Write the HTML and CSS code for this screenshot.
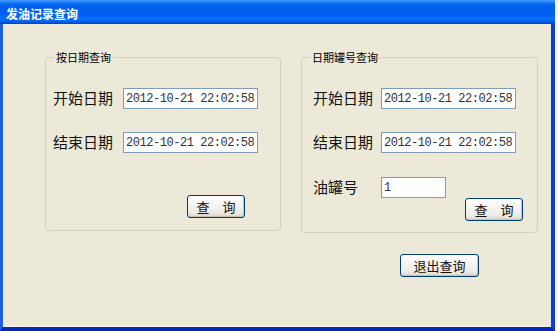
FILE: index.html
```html
<!DOCTYPE html>
<html lang="zh-CN">
<head>
<meta charset="utf-8">
<title>发油记录查询</title>
<link rel="stylesheet" href="styles.css">
</head>
<body>

<!-- ======= JANELA ======= -->
<div class="window">
  <div class="titlebar">发油记录查询</div>

  <div class="client">
    <div class="groups">
      <!-- -------- 按日期查询 -------- -->
      <fieldset class="group group-date">
        <legend>按日期查询</legend>
        <div class="field"><label>开始日期</label><input class="txt" value="2012-10-21 22:02:58"></div>
        <div class="field"><label>结束日期</label><input class="txt" value="2012-10-21 22:02:58"></div>
        <div class="actions"><button class="btn btn-query">查　询</button></div>
      </fieldset>

      <!-- -------- 日期罐号查询 -------- -->
      <fieldset class="group group-tank">
        <legend>日期罐号查询</legend>
        <div class="field"><label>开始日期</label><input class="txt" value="2012-10-21 22:02:58"></div>
        <div class="field"><label>结束日期</label><input class="txt" value="2012-10-21 22:02:58"></div>
        <div class="field field-tank"><label>油罐号</label><input class="txt txt-short" value="1"></div>
        <div class="actions"><button class="btn btn-query">查　询</button></div>
      </fieldset>
    </div>

    <div class="footer"><button class="btn btn-exit">退出查询</button></div>
  </div>
</div>

</body>
</html>
```

FILE: styles.css
```css
/* ---------- RESET ---------- */
*{margin:0;padding:0;box-sizing:border-box;}
body{width:558px;height:331px;overflow:hidden;background:#f4f6fb;
     font-family:"Noto Sans CJK SC","Noto Sans",sans-serif;color:#000;}

/* ---------- JANELA XP ---------- */
.window{width:555px;height:331px;display:flex;flex-direction:column;
        border-left:3px solid #1a5fe4;border-right:4px solid #0a3fd0;border-bottom:4px solid #0629b8;}
.titlebar{height:24px;margin:0 -4px 0 -3px;padding-left:6px;overflow:hidden;
          font-size:12px;font-weight:700;line-height:28px;color:#fff;
          background:linear-gradient(to bottom,#4a9dff 0%,#2584fd 8%,#0b6ef5 14%,#0262ee 24%,#005ef0 56%,#0565f8 68%,#0a6dfd 78%,#0465f0 88%,#0054d8 94%,#0040ae 100%);}
.client{flex:1;background:#ece9d8;padding:26px 13px 0 41px;border-left:1px solid #f3f1e8;border-bottom:1px solid #f8f6ee;}

/* ---------- GROUP BOX ---------- */
.groups{display:flex;gap:20px;align-items:flex-start;}
.group{min-width:0;flex:none;border:1px solid #d0d0bf;border-radius:4px;padding:24px 0 12px;}
.group legend{margin-left:8px;padding:0 2px;font-size:11px;line-height:14px;}
.group-date{width:236px;}
.group-tank{width:237px;padding-bottom:11px;}

/* ---------- CAMPOS ---------- */
.field{display:flex;align-items:center;height:21px;}
.field + .field{margin-top:23px;}
.field label{font-size:15px;line-height:21px;flex:none;padding-bottom:3px;color:#111;}
.group-date .field{padding-left:7px;}
.group-date .field label{width:70px;}
.group-tank .field{padding-left:11px;}
.group-tank .field label{width:68px;}
.group-tank .field-tank{margin-top:24px;}

.txt{width:135px;height:21px;flex:none;border:1px solid #7f9db9;background:#fff;padding:0 2px;
     font-family:"Liberation Mono",monospace;font-size:12px;letter-spacing:-.45px;color:#333;outline:none;}
.txt-short{width:65px;}

/* ---------- BOTÕES ---------- */
.actions{display:flex;justify-content:flex-end;}
.group-date .actions{margin-top:42px;padding-right:35px;}
.group-tank .actions{padding-right:14px;}
.btn{height:23px;border:1px solid #003c74;border-radius:3px;cursor:pointer;
     font-family:inherit;font-size:13px;color:#111;
     background:linear-gradient(to bottom,#fff 0%,#f6f5f1 40%,#ecebe6 80%,#d8d3c6 100%);
     box-shadow:inset -1px -1px 0 #c9c4b6;}
.btn-query{width:58px;}
.btn-exit{width:79px;}
.footer{display:flex;justify-content:flex-end;margin-top:21px;padding-right:59px;}
```
